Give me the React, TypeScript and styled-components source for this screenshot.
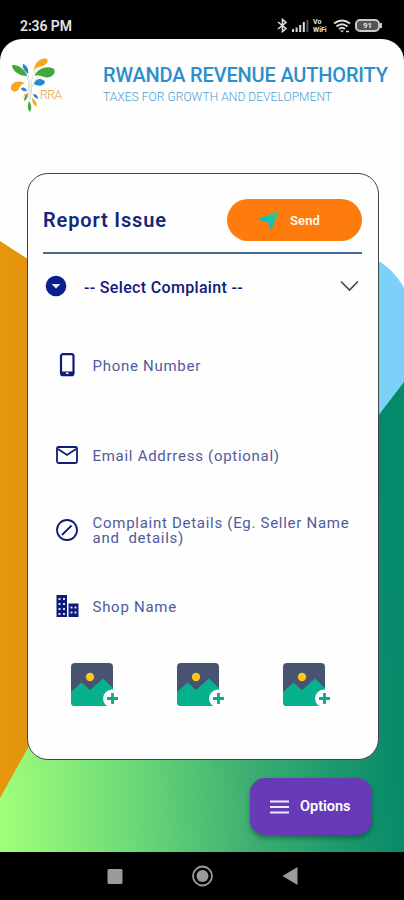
import React from "react";
import styled, { createGlobalStyle } from "styled-components";

const navy = "#101a7c";

const GlobalStyle = createGlobalStyle`
  * { box-sizing: border-box; }
  body { margin: 0; background: #000; font-family: Roboto, sans-serif; }
`;

const Phone = styled.div`
  width: 404px;
  height: 900px;
  display: flex;
  flex-direction: column;
  background: #000;
  overflow: hidden;
`;

const StatusBar = styled.header`
  height: 39px;
  flex: none;
  display: flex;
  align-items: flex-start;
  justify-content: space-between;
  padding: 17px 22px 0 20px;
  color: #e4e4e4;
`;

const Clock = styled.span`
  font-size: 14px;
  line-height: 18px;
  font-weight: 600;
  letter-spacing: -0.1px;
`;

const StatusIcons = styled.div`
  display: flex;
  align-items: center;
  height: 17px;
  gap: 4px;
`;

const VoWifi = styled.span`
  display: flex;
  flex-direction: column;
  font-size: 7px;
  line-height: 8px;
  font-weight: 700;
  width: 16px;
`;

const Battery = styled.span`
  position: relative;
  width: 25px;
  height: 13px;
  border: 2px solid #c9c9c9;
  border-radius: 5px;
  background: #555;
  font-size: 8px;
  line-height: 9px;
  font-weight: 700;
  text-align: center;
  margin-right: 2px;
  &::after {
    content: "";
    position: absolute;
    right: -4px;
    top: 2px;
    width: 2px;
    height: 5px;
    background: #c9c9c9;
  }
`;

const Screen = styled.main`
  position: relative;
  height: 813px;
  flex: none;
  display: flex;
  flex-direction: column;
  background: #fefefe;
  border-radius: 22px 22px 0 0;
  overflow: hidden;
`;

const Backdrop = styled.svg`
  position: absolute;
  inset: 0;
`;

const Brand = styled.div`
  position: relative;
  height: 134px;
  flex: none;
  display: flex;
  align-items: flex-start;
  padding: 17px 0 0 8px;
`;

const BrandText = styled.div`
  display: flex;
  flex-direction: column;
  margin: 8px 0 0 35px;
  white-space: nowrap;
`;

const BrandName = styled.h1`
  margin: 0;
  font: 500 20px/22px Roboto, sans-serif;
  letter-spacing: -0.17px;
  color: #2b8fcb;
`;

const Tagline = styled.span`
  font: 300 12px/22px Roboto, sans-serif;
  letter-spacing: 0.06px;
  color: #4a9fd0;
`;

const Card = styled.section`
  position: relative;
  width: 352px;
  height: 587px;
  flex: none;
  margin-left: 27px;
  padding: 25px 16px 0 15px;
  display: flex;
  flex-direction: column;
  background: #fefefe;
  border: 1px solid #444;
  border-radius: 21px;
`;

const CardHeader = styled.div`
  height: 55px;
  flex: none;
  display: flex;
  align-items: flex-start;
  justify-content: space-between;
  border-bottom: 2px solid #456a92;
`;

const Title = styled.h2`
  margin: 0;
  font-size: 20px;
  line-height: 43px;
  font-weight: 600;
  letter-spacing: 0.85px;
  color: #14277c;
`;

const SendButton = styled.button`
  width: 135px;
  height: 42px;
  border: 0;
  border-radius: 21px;
  background: #fe7b0d;
  color: #fff8ee;
  display: flex;
  align-items: center;
  gap: 11px;
  padding: 0 0 0 32px;
  font: 600 13px Roboto, sans-serif;
  letter-spacing: 0.1px;
`;

const SelectRow = styled.div`
  height: 64px;
  flex: none;
  display: flex;
  align-items: center;
  padding: 0 3px 0 2px;
`;

const SelectLabel = styled.span`
  flex: 1;
  margin-left: 17px;
  font-size: 16px;
  font-weight: 500;
  letter-spacing: 0.33px;
  color: ${navy};
  padding-top: 3px;
`;

const Field = styled.label<{ $height: number }>`
  height: ${(p) => p.$height}px;
  flex: none;
  display: flex;
  align-items: center;
  gap: 13px;
  padding: 2px 0 0 12px;
  font-size: 15px;
  line-height: 15px;
  letter-spacing: 0.72px;
  color: #505a9c;
  white-space: pre;
  svg { margin-bottom: 2px; }
`;

const FieldText = styled.span`
  padding-left: 0.5px;
`;

const Photos = styled.div`
  display: flex;
  gap: 58px;
  padding: 13px 0 0 28px;
`;

const OptionsButton = styled.button`
  position: relative;
  align-self: flex-end;
  width: 122px;
  height: 57px;
  flex: none;
  margin: 18px 32px 0 0;
  border: 0;
  border-radius: 15px;
  background: #673ab7;
  color: #fff;
  box-shadow: 0 3px 5px rgba(0, 0, 0, 0.35);
  display: flex;
  align-items: center;
  gap: 11px;
  padding: 0 0 0 20px;
  font: 600 14.5px Roboto, sans-serif;
`;

const NavBar = styled.nav`
  height: 48px;
  flex: none;
  display: flex;
  align-items: center;
  padding-left: 107px;
`;

function Logo() {
  return (
    <svg width="60" height="58" viewBox="8 56 60 58">
      <g fill="none" stroke="#dce4d5" strokeWidth="1">
        <path d="M30 100 31 82Q34 70 42 65M30 100 32 86Q36 76 44 73M29 99V83Q27 74 22 72M28 93 29 80Q28 73 27 69M30 99 32 86 38 83" />
      </g>
      <path fill="#f5a623" d="M34 69C35 62 42 57 47 59C50 63 43 67 38 67Q35 68 33 72Z" />
      <path fill="#42a83c" d="M35 75C38 68 48 65 54 69C57 74 50 79 44 77Q38 74 35 76Z" />
      <path fill="#42a83c" d="M12 65C18 64 26 70 27 76C19 76 12 71 12 65Z" />
      <path fill="#2289cc" d="M23 64C27 65 29 70 28 74C24 71 22 67 23 64Z" />
      <path fill="#f5a623" d="M11 89C10 83 17 79 25 83Q21 84 20 87C17 93 13 93 11 89Z" />
      <path fill="#2289cc" d="M34 84C35 79 42 77 45 82C43 87 38 86 34 84Z" />
      <path fill="#2289cc" d="M21 88Q25 86 27 91Q22 92 21 88ZM33 94Q38 94 38 99Q34 98 33 94Z" />
      <path fill="#42a83c" d="M24 101Q24 96 28 94Q28 99 24 101ZM29 101Q33 107 30 112Q26 108 29 101Z" />
      <path fill="#f5a623" d="M23 97Q25 93 28 93Q27 96 23 97ZM32 98Q37 101 37 107Q32 104 32 98Z" />
      <text x="40" y="99" textLength="22" fontFamily="Roboto" fontWeight="300" fontSize="12" fill="#dfa337">RRA</text>
    </svg>
  );
}

function Photo() {
  return (
    <svg width="48" height="46" viewBox="0 0 48 46">
      <rect width="42" height="43" rx="4" fill="#475371" />
      <path d="M0 29 10.5 19.5 19 27 32 15.5 42 25V39Q42 43 38 43H4Q0 43 0 39Z" fill="#08b18e" />
      <circle cx="19" cy="14" r="4.2" fill="#f9c619" />
      <circle cx="41" cy="35.5" r="9" fill="#fefefe" />
      <path d="M41.5 30V41M36 35.5H47" stroke="#13a883" strokeWidth="2.8" />
    </svg>
  );
}

export default function App() {
  return (
    <Phone>
      <GlobalStyle />
      <StatusBar>
        <Clock>2:36 PM</Clock>
        <StatusIcons>
          <svg width="11" height="15" viewBox="0 0 11 15" fill="none" stroke="#ddd" strokeWidth="1.6">
            <path d="M1 4 9 10.5 5.5 13.5V1.5L9 4.5 1 11" />
          </svg>
          <svg width="17" height="13" viewBox="0 0 17 13">
            <path d="M0 10h2v3H0zM3.6 8.5h2V13h-2zM7.2 6h2v7h-2zM10.8 3h2v10h-2z" fill="#ddd" />
            <path d="M14.4 1h2v12h-2z" fill="#555" />
          </svg>
          <VoWifi>
            <span>Vo</span>
            <span>WiFi</span>
          </VoWifi>
          <svg width="18" height="14" viewBox="0 0 18 14" fill="none" stroke="#ddd" strokeWidth="2">
            <path d="M1 4.5Q9-1.5 17 4.5M3.5 7.5Q9 3 14.5 7.5M6 10Q9 7.5 12 10" />
            <path d="M7 11.5 9 13.5 11 11.5Z" fill="#ddd" stroke="none" />
            <path d="M13 12.5h3" strokeWidth="1.5" />
          </svg>
          <Battery>91</Battery>
        </StatusIcons>
      </StatusBar>

      <Screen>
        <Backdrop width="404" height="813" viewBox="0 39 404 813">
          <defs>
            <linearGradient id="meadow" gradientUnits="userSpaceOnUse" x1="0" y1="800" x2="404" y2="775">
              <stop offset="0" stopColor="#a0ff79" />
              <stop offset="0.33" stopColor="#6bd977" />
              <stop offset="0.62" stopColor="#3dae72" />
              <stop offset="1" stopColor="#04896a" />
            </linearGradient>
            <linearGradient id="amber" x1="0" y1="0" x2="1" y2="0">
              <stop offset="0" stopColor="#e6960a" />
              <stop offset="1" stopColor="#de9211" />
            </linearGradient>
          </defs>
          <path d="M340 250Q385 253 404 288V420H340Z" fill="#7bd1f8" />
          <path d="M0 700 200 480 378 416 404 382V852H0Z" fill="url(#meadow)" />
          <path d="M0 241 60 280V690L0 798Z" fill="url(#amber)" />
        </Backdrop>

        <Brand>
          <Logo />
          <BrandText>
            <BrandName>RWANDA REVENUE AUTHORITY</BrandName>
            <Tagline>TAXES FOR GROWTH AND DEVELOPMENT</Tagline>
          </BrandText>
        </Brand>

        <Card>
          <CardHeader>
            <Title>Report Issue</Title>
            <SendButton>
              <svg width="20" height="21" viewBox="0 0 20 21">
                <defs>
                  <linearGradient id="plane" x1="1" y1="0" x2="0.3" y2="1">
                    <stop offset="0" stopColor="#3fc96c" />
                    <stop offset="0.6" stopColor="#08c4c0" />
                    <stop offset="1" stopColor="#10b6bd" />
                  </linearGradient>
                </defs>
                <path d="M20 1 0 8.5 3 11.5 9 12 12 20.5Z" fill="url(#plane)" />
              </svg>
              Send
            </SendButton>
          </CardHeader>

          <SelectRow>
            <svg width="22" height="22" viewBox="0 0 22 22">
              <circle cx="11" cy="11" r="10.3" fill="#08208c" />
              <path d="M6.5 9H15.5L11 13.5Z" fill="#e6eaff" />
            </svg>
            <SelectLabel>-- Select Complaint --</SelectLabel>
            <svg width="19" height="12" viewBox="0 0 19 12" fill="none" stroke="#45454d" strokeWidth="1.6">
              <path d="M1 1.5 9.5 10 18 1.5" />
            </svg>
          </SelectRow>

          <Field $height={94}>
            <svg width="24" height="26" viewBox="0 0 24 26">
              <rect x="6" y="2.2" width="12.5" height="21" rx="2" fill="none" stroke={navy} strokeWidth="2.2" />
              <path d="M6 19.5h12v4H6z" fill={navy} />
              <path d="M11 20.5h2.5v1.5h-2.5z" fill="#fff" />
            </svg>
            <FieldText>Phone Number</FieldText>
          </Field>
          <Field $height={86}>
            <svg width="24" height="20" viewBox="0 0 24 20" fill="none" stroke={navy} strokeWidth="1.8">
              <rect x="2" y="2" width="20" height="16" rx="1.5" />
              <path d="M3 4 12 10 21 4" />
            </svg>
            <FieldText>Email Addrress (optional)</FieldText>
          </Field>
          <Field $height={64}>
            <svg width="24" height="24" viewBox="0 0 24 24" fill="none" stroke={navy} strokeWidth="1.8">
              <circle cx="12" cy="12" r="10" />
              <path d="M7 17 16.5 7.5" />
            </svg>
            <FieldText>{"Complaint Details (Eg. Seller Name\nand  details)"}</FieldText>
          </Field>
          <Field $height={88}>
            <svg width="24" height="24" viewBox="0 0 24 24">
              <path d="M1.5 1h10.5v22H1.5zM13.5 9.5h10v13.5h-10z" fill={navy} />
              <path d="M3.5 4h2v2h-2zM8 4h2v2H8zM3.5 9h2v2h-2zM8 9h2v2H8zM3.5 14h2v2h-2zM8 14h2v2H8zM3.5 19h2v2h-2zM8 19h2v2H8zM15.5 12.5h2v2h-2zM19.5 12.5h2v2h-2zM15.5 17.5h2v2h-2zM19.5 17.5h2v2h-2z" fill="#d5d9f4" />
            </svg>
            <FieldText>Shop Name</FieldText>
          </Field>

          <Photos>
            <Photo />
            <Photo />
            <Photo />
          </Photos>
        </Card>

        <OptionsButton>
          <svg width="19" height="14" viewBox="0 0 19 14">
            <path d="M0 1.5H19M0 7H19M0 12.5H19" stroke="#f0eafc" strokeWidth="2" />
          </svg>
          Options
        </OptionsButton>
      </Screen>

      <NavBar>
        <svg width="192" height="24" viewBox="107 0 192 24">
          <rect x="107.5" y="5" width="15" height="15" rx="1.5" fill="#9b9b9b" />
          <circle cx="202.5" cy="12" r="9.5" fill="none" stroke="#9b9b9b" strokeWidth="1.8" />
          <circle cx="202.5" cy="12" r="6" fill="#9b9b9b" />
          <path d="M282.5 12 297.5 3V21Z" fill="#9b9b9b" />
        </svg>
      </NavBar>
    </Phone>
  );
}
